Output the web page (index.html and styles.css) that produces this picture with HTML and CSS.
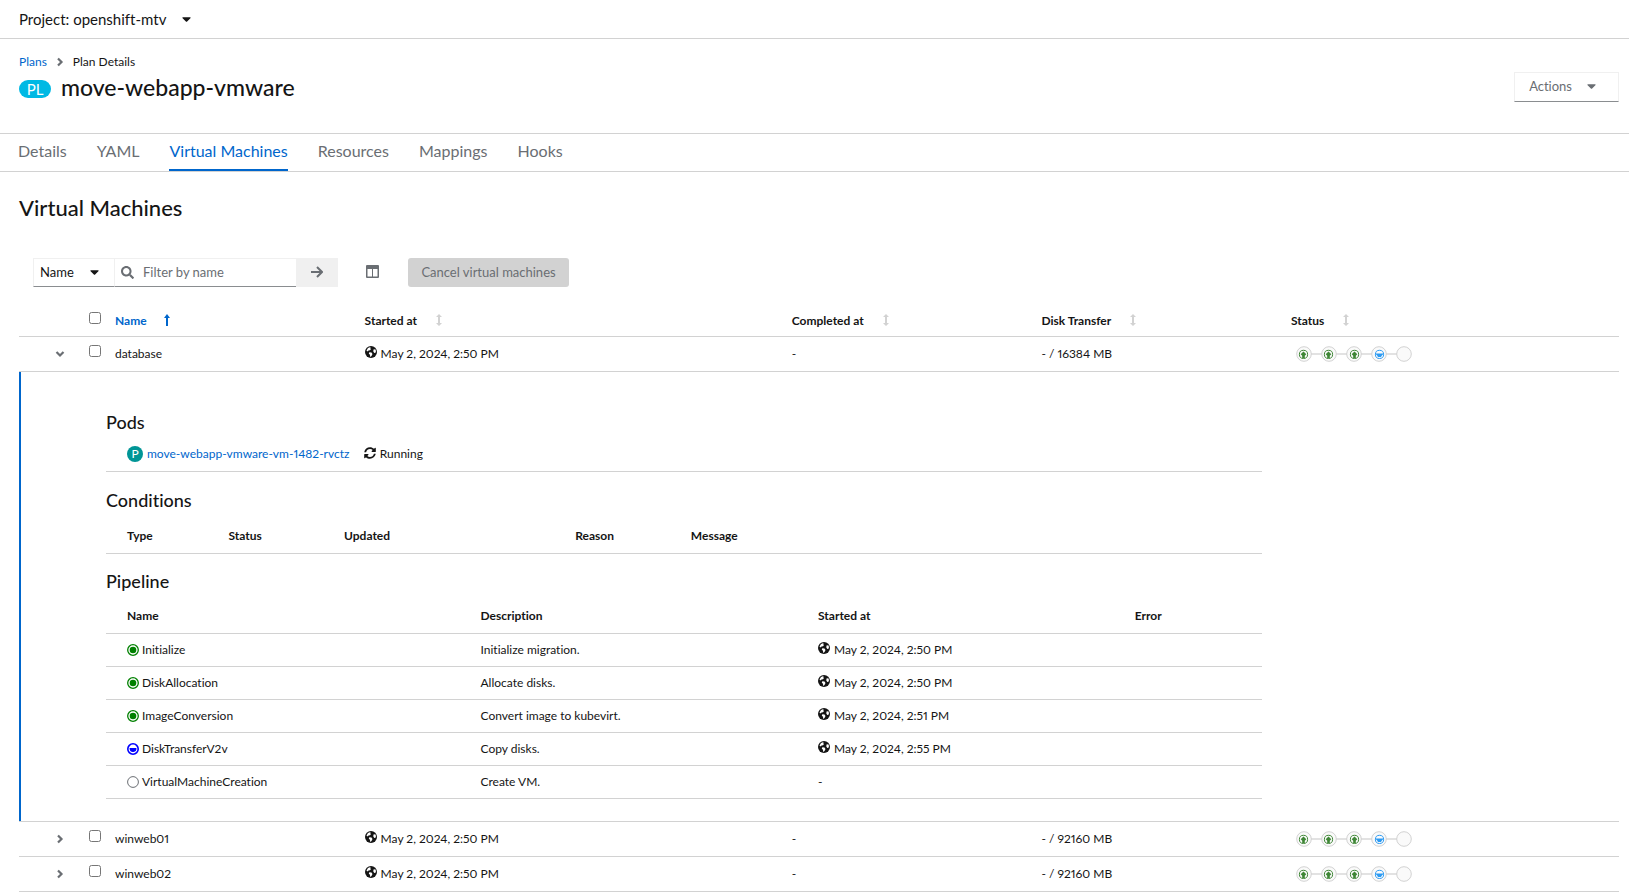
FILE: index.html
```html
<!DOCTYPE html>
<html lang="en">

<head>
    <meta charset="UTF-8">
    <meta name="viewport" content="width=device-width, initial-scale=1.0">
    <title>move-webapp-vmware</title>
    <link rel="stylesheet" href="styles.css">
</head>

<body>

    <!-- shared icons -->
    <svg class="icon-defs" aria-hidden="true">
        <symbol id="caret" viewBox="0 0 320 512">
            <path d="M31.3 192h257.3c17.8 0 26.7 21.5 14.1 34.1L174.1 354.8c-7.8 7.8-20.5 7.8-28.3 0L17.2 226.1C4.6 213.5 13.5 192 31.3 192z" />
        </symbol>
        <symbol id="chevron" viewBox="0 0 10 12">
            <path d="M3 2.500l3.500 3.500-3.500 3.500" fill="none" stroke="currentColor" stroke-width="2.200" />
        </symbol>
        <symbol id="search" viewBox="0 0 512 512">
            <path d="M505 442.7L405.3 343c-4.5-4.5-10.6-7-17-7H372c27.6-35.3 44-79.7 44-128C416 93.1 322.9 0 208 0S0 93.1 0 208s93.1 208 208 208c48.3 0 92.7-16.4 128-44v16.3c0 6.4 2.5 12.5 7 17l99.7 99.7c9.4 9.4 24.6 9.4 33.9 0l28.3-28.3c9.4-9.4 9.4-24.6.1-34zM208 336c-70.7 0-128-57.2-128-128 0-70.7 57.2-128 128-128 70.7 0 128 57.2 128 128 0 70.7-57.2 128-128 128z" />
        </symbol>
        <symbol id="arrow" viewBox="0 0 12 12">
            <path d="M0 6h11M6 1l5 5-5 5" fill="none" stroke="currentColor" stroke-width="2" />
        </symbol>
        <symbol id="columns" viewBox="0 0 13 13">
            <path d="M1 0h11a1 1 0 0 1 1 1v11a1 1 0 0 1-1 1H1a1 1 0 0 1-1-1V1a1 1 0 0 1 1-1zM1.500 4v7.500H6V4zM7 4v7.500h4.500V4z" fill-rule="evenodd" />
        </symbol>
        <symbol id="sort" viewBox="0 0 6 12">
            <path d="M3 0l3 3H4v6h2l-3 3-3-3h2V3H0z" />
        </symbol>
        <symbol id="sort-up" viewBox="0 0 6 12">
            <path d="M3 0l3 4H4v8H2V4H0z" />
        </symbol>
        <symbol id="globe" viewBox="0 0 12 12">
            <circle cx="6" cy="6" r="6" />
            <path d="M5.500 1L3 2 1.500 4.500 2.500 5.500 3.500 4.500 5 4.300 6 3 5.200 2.300zM4.300 6.300L3.800 7.800 5 8.800 5.200 11 6.500 10 7.500 8 6.500 6.500zM8.500 3.500L10.300 3.200 11 5 10.500 6.800 9.300 7 8.300 5.500z" fill="#fff" />
        </symbol>
        <symbol id="sync" viewBox="0 0 512 512">
            <path d="M370.7 133.3C339.5 104 298.9 88 255.8 88c-77.5.1-144.3 53.2-162.8 126.9-1.3 5.4-6.1 9.2-11.7 9.2H24.1c-7.5 0-13.2-6.8-11.8-14.2C33.9 94.9 134.8 8 256 8c66.4 0 126.8 26.1 171.3 68.7L463 41C478.1 25.9 504 36.6 504 57.9V192c0 13.3-10.7 24-24 24H345.9c-21.4 0-32.1-25.9-17-41l41.8-41.7zM32 296h134.1c21.4 0 32.1 25.9 17 41l-41.8 41.8c31.3 29.3 71.8 45.3 114.9 45.3 77.4-.1 144.3-53.1 162.8-126.8 1.3-5.4 6.1-9.2 11.7-9.2h57.3c7.5 0 13.2 6.8 11.8 14.2C478.1 417.1 377.2 504 256 504c-66.4 0-126.8-26.1-171.3-68.7L49 471c-15.1 15.1-41 4.4-41-16.9V320c0-13.3 10.7-24 24-24z" />
        </symbol>
        <symbol id="step-done" viewBox="0 0 12 12">
            <circle cx="6" cy="6" r="5.300" fill="none" stroke="currentColor" stroke-width="1.300" />
            <circle cx="6" cy="6" r="3.300" />
        </symbol>
        <symbol id="step-running" viewBox="0 0 12 12">
            <circle cx="6" cy="6" r="5.200" fill="none" stroke="currentColor" stroke-width="1.600" />
            <path d="M2.600 5h6.800a3.400 3.400 0 0 1-6.800 1z" />
        </symbol>
        <symbol id="step-empty" viewBox="0 0 12 12">
            <circle cx="6" cy="6" r="5.400" fill="none" stroke="currentColor" />
        </symbol>
        <symbol id="progress" viewBox="0 0 116 16">
            <path d="M8 8h100" stroke="#d9d9d9" stroke-width="1.500" />
            <g fill="#fafafa" stroke="#d2d2d2">
                <circle cx="8" cy="8" r="7.300" />
                <circle cx="33" cy="8" r="7.300" />
                <circle cx="58" cy="8" r="7.300" />
                <circle cx="83" cy="8" r="7.300" />
                <circle cx="108" cy="8" r="7.300" />
            </g>
            <g fill="none" stroke="#3e8635">
                <circle cx="7.500" cy="8.400" r="4.100" />
                <circle cx="32.500" cy="8.400" r="4.100" />
                <circle cx="58.500" cy="8.400" r="4.100" />
            </g>
            <path d="M7.500 5.500l2.800 2.800-1.500 1.500V12H6.200V9.800L4.700 8.300zM32.500 5.500l2.800 2.800-1.500 1.500V12h-2.600V9.800l-1.500-1.500zM58.500 5.500l2.800 2.800-1.500 1.500V12h-2.600V9.800l-1.500-1.500z" fill="#3e8635" />
            <circle cx="83.500" cy="8.400" r="4.100" fill="none" stroke="#2b9af3" />
            <path d="M79.500 7.500h8v1.200h-1.200L85 11h-3l-1.300-2.300h-1.200z" fill="#2b9af3" />
        </symbol>
    </svg>

    <header class="project-bar">
        <button type="button" class="project-select">Project: openshift-mtv <svg class="caret"><use href="#caret" /></svg></button>
    </header>

    <section class="page-header">
        <div>
            <nav class="breadcrumb" aria-label="Breadcrumb">
                <a href="#plans">Plans</a>
                <svg class="chevron"><use href="#chevron" /></svg>
                <span>Plan Details</span>
            </nav>
            <h1><span class="badge">PL</span>move-webapp-vmware</h1>
        </div>
        <button type="button" class="actions">Actions <svg class="caret"><use href="#caret" /></svg></button>
    </section>

    <nav class="tabs" aria-label="Plan">
        <a href="#details">Details</a>
        <a href="#yaml">YAML</a>
        <a href="#vms" class="active">Virtual Machines</a>
        <a href="#resources">Resources</a>
        <a href="#mappings">Mappings</a>
        <a href="#hooks">Hooks</a>
    </nav>

    <main>
        <h2>Virtual Machines</h2>

        <form class="toolbar">
            <button type="button" class="filter-type">Name <svg class="caret"><use href="#caret" /></svg></button>
            <div class="search-box">
                <svg><use href="#search" /></svg>
                <input type="text" id="filter" aria-label="Filter by name" placeholder="Filter by name">
            </div>
            <button type="button" class="go" aria-label="Search"><svg><use href="#arrow" /></svg></button>
            <button type="button" class="columns" aria-label="Manage columns"><svg><use href="#columns" /></svg></button>
            <button type="button" class="cancel" disabled>Cancel virtual machines</button>
        </form>

        <table class="vms">
            <colgroup>
                <col class="col-toggle">
                <col class="col-check">
                <col class="col-small">
                <col class="col-started">
                <col class="col-small">
                <col class="col-small">
                <col>
            </colgroup>
            <thead>
                <tr>
                    <th></th>
                    <th><input type="checkbox" aria-label="Select all"></th>
                    <th class="sorted">Name <svg class="sort"><use href="#sort-up" /></svg></th>
                    <th>Started at <svg class="sort"><use href="#sort" /></svg></th>
                    <th>Completed at <svg class="sort"><use href="#sort" /></svg></th>
                    <th>Disk Transfer <svg class="sort"><use href="#sort" /></svg></th>
                    <th>Status <svg class="sort"><use href="#sort" /></svg></th>
                </tr>
            </thead>
            <tbody>
                <tr>
                    <td><button type="button" class="toggle open" aria-label="Collapse database"><svg class="chevron"><use href="#chevron" /></svg></button></td>
                    <td><input type="checkbox" aria-label="Select database"></td>
                    <td>database</td>
                    <td><svg class="globe"><use href="#globe" /></svg>May 2, 2024, 2:50 PM</td>
                    <td>-</td>
                    <td>- / 16384 MB</td>
                    <td><svg class="progress"><use href="#progress" /></svg></td>
                </tr>
                <tr>
                    <td colspan="7">
                        <div class="expanded">
                            <h3>Pods</h3>
                            <table class="detail pods">
                                <colgroup><col class="pod-name"><col></colgroup>
                                <tbody>
                                    <tr>
                                        <td><span class="pod-badge">P</span><a href="#pod">move-webapp-vmware-vm-1482-rvctz</a></td>
                                        <td><svg class="sync"><use href="#sync" /></svg>Running</td>
                                    </tr>
                                </tbody>
                            </table>

                            <h3>Conditions</h3>
                            <table class="detail conditions">
                                <colgroup><col class="cond-type"><col class="cond"><col class="cond-updated"><col class="cond"><col></colgroup>
                                <thead>
                                    <tr>
                                        <th>Type</th>
                                        <th>Status</th>
                                        <th>Updated</th>
                                        <th>Reason</th>
                                        <th>Message</th>
                                    </tr>
                                </thead>
                            </table>

                            <h3>Pipeline</h3>
                            <table class="detail">
                                <colgroup><col class="pipe-name"><col class="pipe-desc"><col class="pipe-start"><col></colgroup>
                                <thead>
                                    <tr>
                                        <th>Name</th>
                                        <th>Description</th>
                                        <th>Started at</th>
                                        <th>Error</th>
                                    </tr>
                                </thead>
                                <tbody>
                                    <tr>
                                        <td><svg class="step done"><use href="#step-done" /></svg>Initialize</td>
                                        <td>Initialize migration.</td>
                                        <td><svg class="globe"><use href="#globe" /></svg>May 2, 2024, 2:50 PM</td>
                                        <td></td>
                                    </tr>
                                    <tr>
                                        <td><svg class="step done"><use href="#step-done" /></svg>DiskAllocation</td>
                                        <td>Allocate disks.</td>
                                        <td><svg class="globe"><use href="#globe" /></svg>May 2, 2024, 2:50 PM</td>
                                        <td></td>
                                    </tr>
                                    <tr>
                                        <td><svg class="step done"><use href="#step-done" /></svg>ImageConversion</td>
                                        <td>Convert image to kubevirt.</td>
                                        <td><svg class="globe"><use href="#globe" /></svg>May 2, 2024, 2:51 PM</td>
                                        <td></td>
                                    </tr>
                                    <tr>
                                        <td><svg class="step running"><use href="#step-running" /></svg>DiskTransferV2v</td>
                                        <td>Copy disks.</td>
                                        <td><svg class="globe"><use href="#globe" /></svg>May 2, 2024, 2:55 PM</td>
                                        <td></td>
                                    </tr>
                                    <tr>
                                        <td><svg class="step"><use href="#step-empty" /></svg>VirtualMachineCreation</td>
                                        <td>Create VM.</td>
                                        <td>-</td>
                                        <td></td>
                                    </tr>
                                </tbody>
                            </table>
                        </div>
                    </td>
                </tr>
                <tr>
                    <td><button type="button" class="toggle" aria-label="Expand winweb01"><svg class="chevron"><use href="#chevron" /></svg></button></td>
                    <td><input type="checkbox" aria-label="Select winweb01"></td>
                    <td>winweb01</td>
                    <td><svg class="globe"><use href="#globe" /></svg>May 2, 2024, 2:50 PM</td>
                    <td>-</td>
                    <td>- / 92160 MB</td>
                    <td><svg class="progress"><use href="#progress" /></svg></td>
                </tr>
                <tr>
                    <td><button type="button" class="toggle" aria-label="Expand winweb02"><svg class="chevron"><use href="#chevron" /></svg></button></td>
                    <td><input type="checkbox" aria-label="Select winweb02"></td>
                    <td>winweb02</td>
                    <td><svg class="globe"><use href="#globe" /></svg>May 2, 2024, 2:50 PM</td>
                    <td>-</td>
                    <td>- / 92160 MB</td>
                    <td><svg class="progress"><use href="#progress" /></svg></td>
                </tr>
            </tbody>
        </table>
    </main>

</body>

</html>
```

FILE: styles.css
```css
* {
    box-sizing: border-box;
}

body {
    margin: 0;
    background-color: #fff;
    color: #151515;
    font-family: Lato, "Liberation Sans", sans-serif;
    font-size: 12px;
    font-variant-ligatures: none;
    font-variant-numeric: proportional-nums;
    line-height: 18px;
}

a {
    color: #06c;
    text-decoration: none;
}

button,
input {
    font: inherit;
    color: inherit;
}

button {
    display: flex;
    align-items: center;
    border: 0;
    padding: 0;
    background: none;
}

h1,
h2,
h3 {
    margin: 0;
    font-weight: 500;
}

svg {
    fill: currentColor;
    flex-shrink: 0;
}

.icon-defs {
    display: none;
}

.caret {
    width: 9px;
    height: 14px;
}

.chevron {
    width: 10px;
    height: 12px;
    color: #6a6e73;
}

/* header */

.project-bar {
    display: flex;
    height: 39px;
    padding: 0 19px;
    border-bottom: 1px solid #d2d2d2;
}

.project-select {
    gap: 16px;
    font-size: 15px;
}

.page-header {
    display: flex;
    justify-content: space-between;
    align-items: flex-start;
    height: 94px;
    padding: 14px 10px 0 19px;
}

.breadcrumb {
    display: flex;
    align-items: center;
    gap: 8px;
}

h1 {
    display: flex;
    align-items: center;
    gap: 10px;
    font-size: 23px;
    line-height: 32px;
}

.badge {
    width: 32px;
    margin-top: 4px;
    border-radius: 9px;
    background-color: #00b9e4;
    color: #fff;
    font-size: 15px;
    font-weight: 400;
    line-height: 18px;
    text-align: center;
}

.actions {
    gap: 15px;
    height: 30px;
    margin-top: 19px;
    padding: 0 22px 2px 14px;
    border: 1px solid #f0f0f0;
    border-bottom-color: #8a8d90;
    color: #6a6e73;
    font-size: 13px;
}

.tabs {
    display: flex;
    gap: 30px;
    height: 39px;
    padding: 0 18px;
    border-top: 1px solid #d2d2d2;
    border-bottom: 1px solid #d2d2d2;
    font-size: 16px;
    line-height: 34px;
}

.tabs a {
    color: #6a6e73;
}

.tabs .active {
    border-bottom: 2px solid #06c;
    color: #06c;
}

/* content */

main {
    padding: 20px 10px 0 19px;
}

h2 {
    font-size: 22px;
    line-height: 32px;
}

.toolbar {
    display: flex;
    height: 29px;
    margin: 34px 0 18px 14px;
    font-size: 13px;
}

.filter-type {
    justify-content: space-between;
    width: 82px;
    padding: 0 15px 1px 6px;
    border: 1px solid #f0f0f0;
    border-bottom-color: #8a8d90;
}

.search-box {
    display: flex;
    align-items: center;
    gap: 9px;
    width: 181px;
    padding: 0 0 1px 6px;
    border-top: 1px solid #f0f0f0;
    border-bottom: 1px solid #8a8d90;
    color: #6a6e73;
}

.search-box svg {
    width: 13px;
    height: 13px;
}

.search-box input {
    flex: 1;
    min-width: 0;
    padding: 0;
    border: 0;
    outline: 0;
}

.search-box input::placeholder {
    color: #6a6e73;
}

.go {
    justify-content: center;
    width: 42px;
    padding-bottom: 2px;
    background-color: #f0f0f0;
    color: #6a6e73;
}

.go svg {
    width: 12px;
    height: 12px;
}

.columns {
    width: 70px;
    padding: 0 0 2px 28px;
    color: #6a6e73;
}

.columns svg {
    width: 13px;
    height: 13px;
}

.cancel {
    justify-content: center;
    width: 161px;
    padding-bottom: 1px;
    border-radius: 3px;
    background-color: #d2d2d2;
    color: #6a6e73;
}

/* tables */

table {
    width: 100%;
    table-layout: fixed;
    border-spacing: 0;
}

th,
td {
    padding: 0;
    border-bottom: 1px solid #d2d2d2;
    text-align: left;
}

.vms > thead th {
    height: 32px;
    padding-top: 1px;
}

.vms > tbody > tr > td {
    height: 35px;
}

.col-toggle {
    width: 70px;
}

.col-check {
    width: 26px;
}

.col-small {
    width: 15.6%;
}

.col-started {
    width: 26.7%;
}

input[type="checkbox"] {
    display: block;
    width: 12px;
    height: 12px;
    margin: 0 0 6px;
}

.sorted,
.sorted .sort {
    color: #06c;
}

.sort {
    width: 6px;
    height: 12px;
    margin-left: 16px;
    color: #d2d2d2;
    vertical-align: -1px;
}

.sorted .sort {
    margin-left: 14px;
}

.toggle {
    margin-left: 36px;
}

.open .chevron {
    transform: rotate(90deg);
}

.globe,
.sync,
.step {
    width: 12px;
    height: 12px;
    margin-right: 4px;
    vertical-align: 0;
}

.sync {
    vertical-align: -1px;
}

.step {
    margin-right: 3px;
    vertical-align: -2px;
    color: #6a6e73;
}

.done {
    color: green;
}

.running {
    color: blue;
}

.progress {
    display: block;
    width: 116px;
    height: 16px;
    margin-left: 5px;
}

/* expanded row */

.expanded {
    padding: 38px 0 22px 85px;
    border-left: 2px solid #06c;
}

h3 {
    margin-bottom: 6px;
    font-size: 18px;
    line-height: 24px;
}

.detail {
    width: 76.4%;
    margin-bottom: 16px;
}

.conditions {
    margin-bottom: 15px;
}

.detail:last-child {
    margin-bottom: 0;
}

.detail th {
    height: 35px;
}

.conditions th {
    height: 36px;
}

.detail td {
    height: 33px;
}

.detail th:first-child,
.detail td:first-child {
    padding-left: 21px;
}

.pods td {
    height: 32px;
    padding-bottom: 4px;
}

.pod-badge {
    display: inline-block;
    width: 16px;
    margin-right: 4px;
    border-radius: 8px;
    background-color: #009596;
    color: #fff;
    line-height: 16px;
    text-align: center;
}

.pod-name {
    width: 22.3%;
}

.cond-type {
    width: 10.6%;
}

.cond {
    width: 10%;
}

.cond-updated {
    width: 20%;
}

.pipe-name {
    width: 32.4%;
}

.pipe-desc {
    width: 29.2%;
}

.pipe-start {
    width: 27.4%;
}
```
